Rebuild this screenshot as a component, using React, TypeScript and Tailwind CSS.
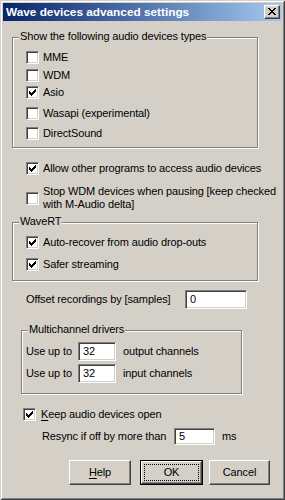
import React from "react";

const face = "bg-[#d4d0c8]";

const CheckMark = () => (
  <svg width="7" height="7" viewBox="0 0 7 7" shapeRendering="crispEdges" className="absolute left-[2px] top-[2px]">
    <rect x="0" y="2" width="1" height="3" fill="#000" />
    <rect x="1" y="3" width="1" height="3" fill="#000" />
    <rect x="2" y="4" width="1" height="3" fill="#000" />
    <rect x="3" y="3" width="1" height="3" fill="#000" />
    <rect x="4" y="2" width="1" height="3" fill="#000" />
    <rect x="5" y="1" width="1" height="3" fill="#000" />
    <rect x="6" y="0" width="1" height="3" fill="#000" />
  </svg>
);

const Box = ({ checked }: { checked?: boolean }) => (
  <div className="relative w-[13px] h-[13px] shrink-0 bg-white border border-t-[#808080] border-l-[#808080] border-r-white border-b-white shadow-[inset_1px_1px_0_#404040,inset_-1px_-1px_0_#d4d0c8]">
    {checked && <CheckMark />}
  </div>
);

const Check = ({
  label,
  checked,
  className = "",
  gap = "ml-[4px]",
}: {
  label: React.ReactNode;
  checked?: boolean;
  className?: string;
  gap?: string;
}) => (
  <div className={`flex items-center ${className}`}>
    <Box checked={checked} />
    <span className={`${gap} whitespace-nowrap`}>{label}</span>
  </div>
);

const Edit = ({ value, className = "" }: { value: string; className?: string }) => (
  <div
    className={`flex items-center bg-white pl-[4px] border border-t-[#808080] border-l-[#808080] border-r-white border-b-white shadow-[inset_1px_1px_0_#404040,inset_-1px_-1px_0_#d4d0c8] ${className}`}
  >
    {value}
  </div>
);

const Group = ({
  label,
  className = "",
  children,
}: {
  label: string;
  className?: string;
  children: React.ReactNode;
}) => (
  <div className={`relative border border-[#808080] shadow-[1px_1px_0_#fff,inset_1px_1px_0_#fff] ${className}`}>
    <span className={`absolute left-[6px] top-[-8px] px-[1px] whitespace-nowrap ${face}`}>{label}</span>
    {children}
  </div>
);

const raised =
  "border border-t-white border-l-white border-r-[#404040] border-b-[#404040] shadow-[inset_-1px_-1px_0_#808080]";

const Btn = ({ children, className = "" }: { children: React.ReactNode; className?: string }) => (
  <div className={`flex items-center justify-center h-[25px] ${face} ${raised} ${className}`}>{children}</div>
);

export default function App() {
  return (
    <div
      className={`relative w-[285px] h-[500px] ${face} p-[3px] text-black text-[11px] leading-[13px] tracking-[-0.13px] font-['Liberation_Sans',Arial,sans-serif] shadow-[inset_1px_1px_0_#d4d0c8,inset_-1px_-1px_0_#404040,inset_2px_2px_0_#fff,inset_-2px_-2px_0_#808080]`}
    >
      {/* title bar */}
      <div className="flex items-center h-[18px] pl-[3px] pr-[2px] bg-gradient-to-r from-[#0a246a] to-[#a6caf0]">
        <span className="text-white font-bold text-[11.8px] leading-[14px] tracking-normal whitespace-nowrap">
          Wave devices advanced settings
        </span>
        <div className={`relative ml-auto w-[16px] h-[14px] ${face} ${raised}`}>
          <svg width="8" height="7" viewBox="0 0 8 7" shapeRendering="crispEdges" className="absolute left-[3px] top-[2px]">
            <rect x="0" y="0" width="2" height="1" fill="#000" />
            <rect x="6" y="0" width="2" height="1" fill="#000" />
            <rect x="1" y="1" width="2" height="1" fill="#000" />
            <rect x="5" y="1" width="2" height="1" fill="#000" />
            <rect x="2" y="2" width="4" height="1" fill="#000" />
            <rect x="3" y="3" width="2" height="1" fill="#000" />
            <rect x="2" y="4" width="4" height="1" fill="#000" />
            <rect x="1" y="5" width="2" height="1" fill="#000" />
            <rect x="5" y="5" width="2" height="1" fill="#000" />
            <rect x="0" y="6" width="2" height="1" fill="#000" />
            <rect x="6" y="6" width="2" height="1" fill="#000" />
          </svg>
        </div>
      </div>

      <div className="flex flex-col pl-[9px]">
        <Group label="Show the following audio devices types" className="mt-[16px] w-[246px] h-[111px] pl-[13px] pt-[13px]">
          <Check label="MME" />
          <Check label="WDM" className="mt-[5px]" />
          <Check label="Asio" checked className="mt-[4px]" />
          <Check label="Wasapi (experimental)" className="mt-[8px]" />
          <Check label="DirectSound" className="mt-[7px]" />
        </Group>

        <Check label="Allow other programs to access audio devices" checked className="mt-[14px] ml-[14px]" />

        <Check
          className="mt-[10px] ml-[14px] h-[26px]"
          label={
            <>
              Stop WDM devices when pausing [keep checked
              <br />
              with M-Audio delta]
            </>
          }
        />

        <Group label="WaveRT" className="mt-[11px] w-[246px] h-[59px] pl-[13px] pt-[13px]">
          <Check label="Auto-recover from audio drop-outs" checked />
          <Check label="Safer streaming" checked className="mt-[9px]" />
        </Group>

        <div className="flex items-center mt-[9px] ml-[14px]">
          <span className="w-[159px] whitespace-nowrap">Offset recordings by [samples]</span>
          <Edit value="0" className="w-[62px] h-[19px]" />
        </div>

        <Group label="Multichannel drivers" className="mt-[21px] ml-[9px] w-[221px] h-[64px] pl-[4px] pt-[11px]">
          <div className="flex items-center">
            <span className="w-[52px] whitespace-nowrap">Use up to</span>
            <Edit value="32" className="w-[38px] h-[19px]" />
            <span className="ml-[7px] whitespace-nowrap">output channels</span>
          </div>
          <div className="flex items-center mt-[3px]">
            <span className="w-[52px] whitespace-nowrap">Use up to</span>
            <Edit value="32" className="w-[38px] h-[19px]" />
            <span className="ml-[7px] whitespace-nowrap">input channels</span>
          </div>
        </Group>

        <Check
          className="mt-[14px] ml-[11px]"
          gap="ml-[5px]"
          checked
          label={
            <>
              <span className="underline underline-offset-[2px]">K</span>eep audio devices open
            </>
          }
        />

        <div className="flex items-center mt-[7px] ml-[30px]">
          <span className="w-[132px] whitespace-nowrap">Resync if off by more than</span>
          <Edit value="5" className="w-[41px] h-[17px]" />
          <span className="ml-[7px]">ms</span>
        </div>

        <div className="flex mt-[15px] ml-[57px]">
          <Btn className="w-[62px]">
            <span>
              <span className="underline underline-offset-[2px]">H</span>elp
            </span>
          </Btn>
          <div className="relative ml-[9px] w-[63px] h-[25px] border border-black">
            <Btn className="w-full h-full">OK</Btn>
            <div className="absolute inset-[3px] border border-dotted border-black" />
          </div>
          <Btn className="ml-[6px] w-[61px]">Cancel</Btn>
        </div>
      </div>
    </div>
  );
}
